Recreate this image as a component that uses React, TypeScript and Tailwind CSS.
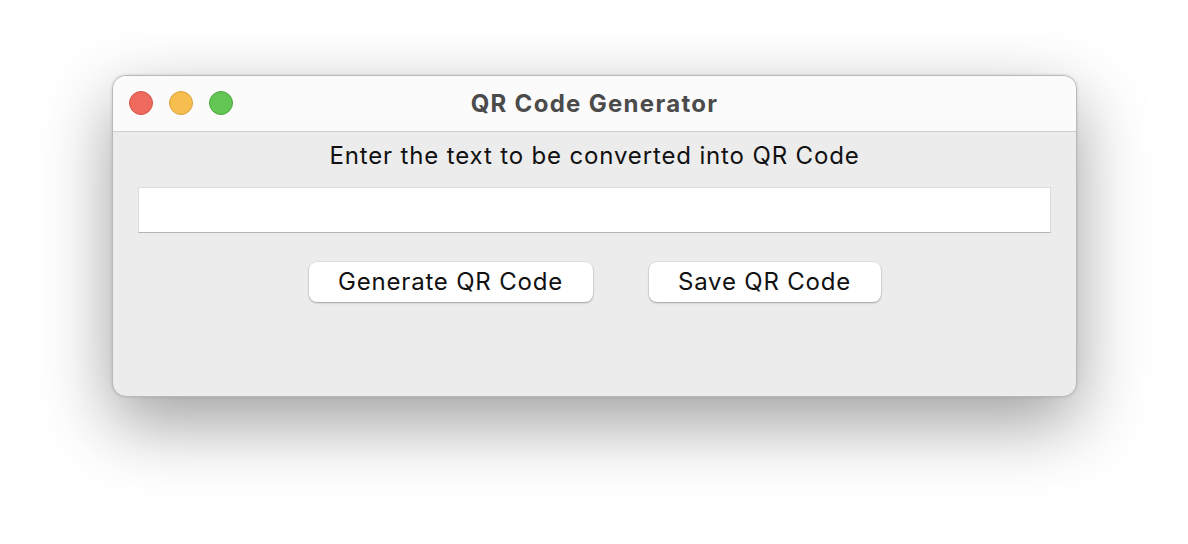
import React from 'react';

const App: React.FC = () => {
  return (
    <div className="w-[1188px] h-[544px] bg-white pt-[75px] pl-[112px] font-['Inter','Liberation_Sans',sans-serif]">
      {/* window */}
      <div className="w-[965px] h-[322px] rounded-[14px] border border-[#b9b9b9] bg-[#ececec] overflow-hidden shadow-[0_26px_70px_rgba(0,0,0,0.38),0_0_3px_rgba(0,0,0,0.15)] flex flex-col">
        {/* title bar */}
        <div className="relative h-[56px] shrink-0 bg-[#fbfbfb] border-b border-[#cfcfcf] flex items-center justify-center">
          <div className="absolute left-[16px] top-[15px] flex gap-[16px]">
            <span className="w-[24px] h-[24px] rounded-full bg-[#ee6a5f] border border-[#d55549]" />
            <span className="w-[24px] h-[24px] rounded-full bg-[#f5be4f] border border-[#d9a23b]" />
            <span className="w-[24px] h-[24px] rounded-full bg-[#62c554] border border-[#4ea63f]" />
          </div>
          <span className="text-[24px] font-bold text-[#4b4b4b] tracking-[1.3px]">QR Code Generator</span>
        </div>

        {/* body */}
        <div className="flex-1 flex flex-col items-center pt-[11px]">
          <p className="text-[24px] leading-[26px] text-[#111] tracking-[0.85px]">Enter the text to be converted into QR Code</p>
          <div className="mt-[18px] w-[913px] h-[46px] bg-white border border-[#dcdcdc] border-b-[#b5b5b5]" />
          <div className="mt-[29px] flex gap-[56px]">
            <button className="w-[284px] h-[40px] rounded-[8px] bg-white text-[24px] text-[#111] tracking-[0.8px] shadow-[0_1px_2px_rgba(0,0,0,0.3),0_0_0_0.5px_rgba(0,0,0,0.08)]">
              Generate QR Code
            </button>
            <button className="w-[232px] h-[40px] rounded-[8px] bg-white text-[24px] text-[#111] tracking-[0.8px] shadow-[0_1px_2px_rgba(0,0,0,0.3),0_0_0_0.5px_rgba(0,0,0,0.08)]">
              Save QR Code
            </button>
          </div>
        </div>
      </div>
    </div>
  );
};

export default App;
